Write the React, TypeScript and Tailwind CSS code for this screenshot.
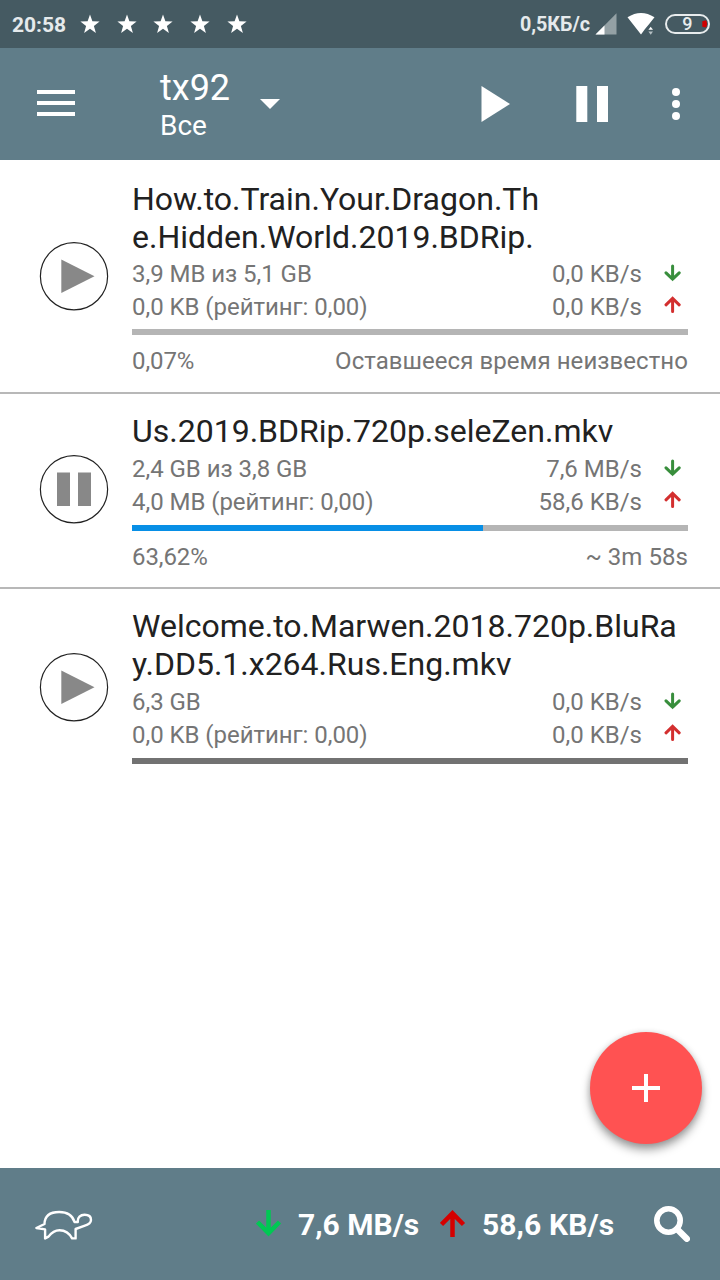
import React from 'react';

type Torrent = {
  lines: string[];
  size: string;
  uploaded: string;
  down: string;
  up: string;
  progress: number;
  percent?: string;
  eta?: string;
  paused: boolean;
  rowClass: string;
  iconClass: string;
  statsClass: string;
  trackClass: string;
};

const torrents: Torrent[] = [
  {
    lines: ['How.to.Train.Your.Dragon.Th', 'e.Hidden.World.2019.BDRip.'],
    size: '3,9 MB из 5,1 GB',
    uploaded: '0,0 KB (рейтинг: 0,00)',
    down: '0,0 KB/s',
    up: '0,0 KB/s',
    progress: 0,
    percent: '0,07%',
    eta: 'Оставшееся время неизвестно',
    paused: true,
    rowClass: 'h-[234px] border-b-2 pt-5',
    iconClass: 'mt-[61px]',
    statsClass: 'pt-0.5 -mb-px',
    trackClass: 'bg-[#b5b5b5]',
  },
  {
    lines: ['Us.2019.BDRip.720p.seleZen.mkv'],
    size: '2,4 GB из 3,8 GB',
    uploaded: '4,0 MB (рейтинг: 0,00)',
    down: '7,6 MB/s',
    up: '58,6 KB/s',
    progress: 63.1,
    percent: '63,62%',
    eta: '~ 3m 58s',
    paused: false,
    rowClass: 'h-[195px] border-b-2 pt-[18px]',
    iconClass: 'mt-[42px]',
    statsClass: 'pt-[3px]',
    trackClass: 'bg-[#b5b5b5]',
  },
  {
    lines: ['Welcome.to.Marwen.2018.720p.BluRa', 'y.DD5.1.x264.Rus.Eng.mkv'],
    size: '6,3 GB',
    uploaded: '0,0 KB (рейтинг: 0,00)',
    down: '0,0 KB/s',
    up: '0,0 KB/s',
    progress: 0,
    paused: true,
    rowClass: 'pt-[18px]',
    iconClass: 'mt-[45px]',
    statsClass: 'pt-[3px]',
    trackClass: 'bg-[#727272]',
  },
];

function DownArrow({ className }: { className: string }) {
  return (
    <svg viewBox="0 0 18 18" className={className} fill="none" stroke="currentColor" strokeWidth="3" strokeLinecap="round">
      <path d="M8.6 2v13M2 8.8l6.6 6.4 6.6-6.4" />
    </svg>
  );
}

function UpArrow({ className }: { className: string }) {
  return (
    <svg viewBox="0 0 18 18" className={className} fill="none" stroke="currentColor" strokeWidth="3" strokeLinecap="round">
      <path d="M8.6 15.6v-13M2 8.8l6.6-6.4 6.6 6.4" />
    </svg>
  );
}

function StateIcon({ paused, className }: { paused: boolean; className: string }) {
  return (
    <svg viewBox="0 0 70 70" className={`ml-[39px] size-[70px] shrink-0 ${className}`}>
      <circle cx="35" cy="35.2" r="33.6" fill="white" stroke="#222" strokeWidth="1.2" />
      {paused ? (
        <path d="M22.3 18.4V52L55.5 35.2z" fill="#888" />
      ) : (
        <path d="M18 18.5h13v33.5H18zM39 18.5h13v33.5H39z" fill="#888" />
      )}
    </svg>
  );
}

function Row({ t }: { t: Torrent }) {
  return (
    <div className={`flex items-start border-[#b8b8b8] ${t.rowClass}`}>
      <StateIcon paused={t.paused} className={t.iconClass} />
      <div className="ml-[23px] w-[556px] text-2xl/[33px] text-[#757575]">
        <div className="text-[32px]/[38px] text-[#212121]">
          {t.lines.map((line) => (
            <div key={line} className="whitespace-nowrap">{line}</div>
          ))}
        </div>
        <div className={t.statsClass}>
          <div className="flex justify-between">
            <span className="tracking-[-0.04px]">{t.size}</span>
            <span className="flex">
              {t.down}
              <DownArrow className="mt-[6px] mr-1.5 ml-[22px] size-[18px] text-[#388e3c]" />
            </span>
          </div>
          <div className="flex justify-between">
            <span className="tracking-[-0.04px]">{t.uploaded}</span>
            <span className="flex">
              {t.up}
              <UpArrow className="mt-[5px] mr-1.5 ml-[22px] size-[18px] text-[#d32f2f]" />
            </span>
          </div>
        </div>
        <div className={`mt-1.5 h-1.5 ${t.trackClass}`}>
          <div className="h-full bg-[#078fe6]" style={{ width: `${t.progress}%` }} />
        </div>
        {t.percent && (
          <div className="mt-2.5 flex justify-between">
            <span className="tracking-[-0.1px]">{t.percent}</span>
            <span className="tracking-[0.06px]">{t.eta}</span>
          </div>
        )}
      </div>
    </div>
  );
}

function StatusBar() {
  return (
    <div className="flex h-12 items-center bg-[#455a62] text-[#e6eaec]">
      <span className="ml-3 w-[68px] pt-0.5 text-[21px]/[46px] font-bold">20:58</span>
      <div className="flex gap-[16.7px]">
        {[0, 1, 2, 3, 4].map((i) => (
          <svg key={i} viewBox="0 0 20 20" className="size-5 fill-white">
            <path d="M10 .5l2.4 6.8 7.2.2-5.7 4.4 2 7-5.9-4.1-5.9 4.1 2-7L.4 7.5l7.2-.2z" />
          </svg>
        ))}
      </div>
      <div className="ml-auto flex items-center pr-2.5">
        <span className="pt-0.5 text-[19.7px]/[46px] font-bold">0,5КБ/с</span>
        <svg viewBox="0 0 22 22" className="ml-[5px] h-[22px] w-[22px]">
          <path d="M21.5 .3V21.5H.5z" fill="#94a1a5" />
          <path d="M9.5 12.4v9.1H.5z" fill="white" />
        </svg>
        <svg viewBox="0 0 28 24" className="ml-2.5 h-6 w-7">
          <path d="M.5 5.3Q14-3.4 27.5 5.3L22 12.2 18 17 14 22.6z" fill="white" />
          <path d="M21.4 17.8 23.7 14.7 26 17.8z" fill="white" />
          <path d="M21.4 19.6 23.7 22.7 26 19.6z" fill="#b6c0c4" />
        </svg>
        <svg viewBox="0 0 45 20" className="ml-2.5 h-5 w-[45px]">
          <rect x="1" y="1" width="43" height="18" rx="9" fill="none" stroke="#e8eced" strokeWidth="2" />
          <path d="M37.3 7.2l3.7-.9a7 7 0 0 1 0 7.2l-3.7-.7z" fill="#d00000" />
          <text x="22.3" y="16" textAnchor="middle" fontSize="18" fontWeight="500" fill="#e8eced">9</text>
        </svg>
      </div>
    </div>
  );
}

function Toolbar() {
  return (
    <div className="flex h-28 items-start bg-[#607d89] text-white">
      <div className="mt-[42px] ml-[37px] flex w-[38px] flex-col gap-[6.6px]">
        <div className="h-[4.3px] bg-white" />
        <div className="h-[4.3px] bg-white" />
        <div className="h-[4.3px] bg-white" />
      </div>
      <div className="mt-[19px] ml-[85px] w-[71px]">
        <div className="text-4xl/[42px]">tx92</div>
        <div className="pt-px text-[28px]/[32px]">Все</div>
      </div>
      <svg viewBox="0 0 20 10" className="mt-[51px] ml-[29px] h-2.5 w-5 fill-white">
        <path d="M0 0h20L10 10z" />
      </svg>
      <svg viewBox="0 0 29 36" className="mt-[38px] ml-[201px] h-9 w-[29px] fill-white">
        <path d="M.5 0v36L29 18z" />
      </svg>
      <svg viewBox="0 0 32 36" className="mt-[38px] ml-[66px] h-9 w-8 fill-white">
        <path d="M.3 0h11v36h-11zM21 0h11v36H21z" />
      </svg>
      <svg viewBox="0 0 8 32" className="mt-10 ml-16 h-8 w-2 fill-white">
        <circle cx="4" cy="4" r="4" />
        <circle cx="4" cy="16" r="4" />
        <circle cx="4" cy="28" r="4" />
      </svg>
    </div>
  );
}

function BottomBar() {
  return (
    <div className="flex h-28 items-center bg-[#607d89] text-[30px]/[34px] font-bold text-white">
      <svg viewBox="0 0 58 30" className="mt-0.5 ml-[35px] h-[30px] w-[58px]" fill="none" stroke="white" strokeWidth="2.4" strokeLinejoin="round" strokeLinecap="round">
        <path d="M9.5 14C9.7 5.5 15 2 24.2 2c9 0 13.4 3.6 15.3 10h3.3c-.4-4.6 2.6-7.3 6.8-7.3 4.2 0 6.4 2.3 6.4 5.2 0 3.5-3 4.8-6.8 6l-8.6 3.1v9.4h-3.5c-2.8-5.4-6.7-8.2-12.6-8.2-5.3 0-8.6 3.2-11 6.4l-3.4 1.8v-9L1.4 18l8.1-4z" />
      </svg>
      <svg viewBox="0 0 26 28" className="ml-[163px] h-7 w-[26px]" fill="none" stroke="#00c853" strokeWidth="4.5">
        <path d="M12.5 0v24M1.5 12 12.5 23.2 23.5 12" />
      </svg>
      <span className="mt-px ml-4 w-[125px] whitespace-nowrap">7,6 MB/s</span>
      <svg viewBox="0 0 26 28" className="ml-[17px] h-7 w-[26px]" fill="none" stroke="#d50000" strokeWidth="4.5">
        <path d="M12.5 27V4M1.5 14.5 12.5 3.3l11 11.2" />
      </svg>
      <span className="mt-px ml-4 w-[132px] tracking-[0.1px] whitespace-nowrap">58,6 KB/s</span>
      <svg viewBox="0 0 36 36" className="ml-10 size-9" fill="none" stroke="white">
        <circle cx="14.5" cy="14.5" r="11.7" strokeWidth="5.6" />
        <path d="M23 23l9.8 9.8" strokeWidth="6.4" strokeLinecap="round" />
      </svg>
    </div>
  );
}

export default function App() {
  return (
    <div className="relative flex h-[1280px] w-[720px] flex-col overflow-hidden bg-white font-['Roboto',sans-serif]">
      <StatusBar />
      <Toolbar />
      <main className="flex-1">
        {torrents.map((t) => (
          <Row key={t.size} t={t} />
        ))}
      </main>
      <BottomBar />
      <button aria-label="Добавить" className="absolute right-[18px] bottom-[136px] flex size-28 items-center justify-center rounded-full bg-[#ff5252] shadow-[0_6px_10px_rgba(0,0,0,0.35),0_1px_6px_rgba(0,0,0,0.15)]">
        <svg viewBox="0 0 28 28" className="size-7 fill-white">
          <path d="M12 0h4v12h12v4H16v12h-4V16H0v-4h12z" />
        </svg>
      </button>
    </div>
  );
}
